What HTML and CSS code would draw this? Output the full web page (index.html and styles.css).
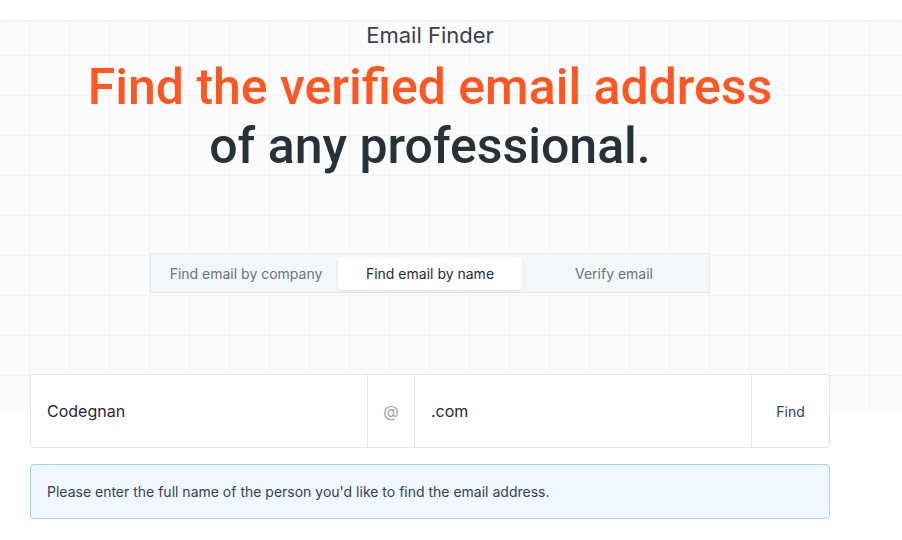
FILE: index.html
```html
<!DOCTYPE html>
<html lang="en">
<head>
  <meta charset="UTF-8">
  <title>Email Finder</title>
  <link rel="stylesheet" href="styles.css">
</head>
<body>
  <div class="topbar"></div>

  <section class="hero">
    <div class="wrap">
      <div class="eyebrow">Email Finder</div>
      <h1>
        <span class="accent">Find the verified email address</span><br>
        of any professional.
      </h1>
      <div class="tabs">
        <button class="tab">Find email by company</button>
        <button class="tab active">Find email by name</button>
        <button class="tab">Verify email</button>
      </div>
    </div>
  </section>

  <div class="wrap form-area">
    <form class="finder" onsubmit="return false">
      <input class="field" type="text" value="Codegnan">
      <span class="at">@</span>
      <input class="field" type="text" value=".com">
      <button class="find-btn">Find</button>
    </form>

    <div class="notice">Please enter the full name of the person you'd like to find the email address.</div>
  </div>
</body>
</html>
```

FILE: styles.css
```css
body {
  margin: 0;
  font-family: Inter, "Noto Sans", sans-serif;
  background: #fff;
  color: #1f2937;
}
.topbar {
  height: 20px;
  background: #fff;
  box-shadow: 0 1px 4px rgba(0, 0, 0, 0.06);
  position: relative;
  z-index: 1;
}
.hero {
  height: 393px;
  background-color: #fbfbfb;
  background-image:
    linear-gradient(to right, #f3f3f4 1px, transparent 1px),
    linear-gradient(to bottom, #f3f3f4 1px, transparent 1px);
  background-size: 40px 40px;
  background-position: 29px 35px;
}
.wrap {
  width: 800px;
  margin-left: 30px;
}
.hero .wrap {
  text-align: center;
}
.eyebrow {
  font-size: 22px;
  line-height: 30px;
  color: #374151;
}
h1 {
  margin: 8px 0 0;
  font-family: Roboto, sans-serif;
  font-weight: 500;
  font-size: 50px;
  line-height: 59px;
  color: #263238;
}
.accent {
  color: #ff5722;
}
.tabs {
  display: grid;
  grid-template-columns: 1fr 1fr 1fr;
  width: 552px;
  margin: 77px auto 0;
  padding: 3px 3px 2px;
  background: #f3f7f9;
  border: 1px solid #e2e8ee;
}
.tab {
  font-family: Inter, sans-serif;
  font-size: 14px;
  color: #6b7280;
  background: transparent;
  border: none;
  border-radius: 3px;
  height: 33px;
  padding: 0;
  cursor: pointer;
}
.tab.active {
  background: #fff;
  color: #1f2937;
  box-shadow: 0 1px 3px rgba(0, 0, 0, 0.1);
}
.form-area {
  margin-top: -39px;
  position: relative;
}
.finder {
  display: flex;
  height: 72px;
  background: #fff;
  border: 1px solid #e3e5ea;
  border-radius: 4px;
  margin: 0;
}
.field {
  flex: 1;
  border: none;
  outline: none;
  padding: 0 16px;
  font-family: Inter, sans-serif;
  font-size: 16px;
  color: #1f2937;
  background: transparent;
  min-width: 0;
}
.at {
  width: 46px;
  display: flex;
  align-items: center;
  justify-content: center;
  color: #9ca3af;
  font-size: 16px;
  border-left: 1px solid #e3e5ea;
  border-right: 1px solid #e3e5ea;
}
.find-btn {
  width: 78px;
  border: none;
  border-left: 1px solid #e3e5ea;
  background: #fff;
  font-family: Inter, sans-serif;
  font-size: 14px;
  color: #374151;
  border-radius: 0 4px 4px 0;
  cursor: pointer;
}
.notice {
  margin-top: 16px;
  padding: 18px 16px;
  background: #f0f7ff;
  border: 1px solid #a3d2fc;
  border-radius: 4px;
  font-size: 14px;
  color: #374151;
}
```
